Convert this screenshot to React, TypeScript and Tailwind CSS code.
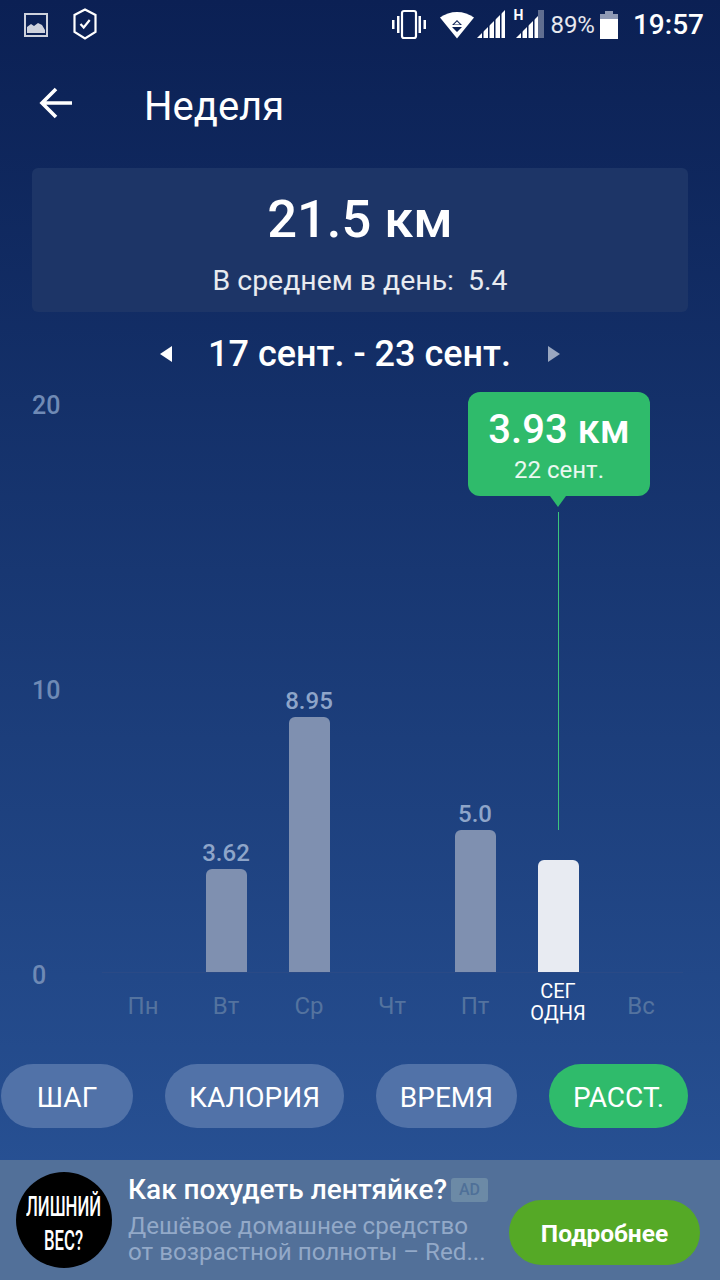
const font = { fontFamily: 'Roboto, "Noto Sans", sans-serif' };

function StatusBar() {
  return (
    <div className="flex h-[50px] items-center justify-between pl-[24px] pr-[16px] text-white">
      <div className="flex items-center gap-[25px]">
        <svg width="24" height="24" viewBox="0 0 24 24" className="opacity-80">
          <rect x="1" y="1" width="22" height="22" fill="none" stroke="#fff" strokeWidth="2" />
          <path d="M3 20v-6l4-3 3 2 4-3 4 2 3 5v3z" fill="#fff" />
        </svg>
        <svg width="24" height="32" viewBox="0 0 24 32" className="-mt-[2px]">
          <path d="M12 1.5 22.5 7v17L12 30.5 1.500 24V7z" fill="none" stroke="#fff" strokeWidth="2.200" />
          <path d="m7.500 16 3.200 3.500 6-7.500" fill="none" stroke="#fff" strokeWidth="2.200" />
        </svg>
      </div>
      <div className="flex items-center">
        <svg width="36" height="32" viewBox="0 0 36 32" className="mr-[13px]">
          <rect x="11" y="2" width="14" height="27" rx="2" fill="none" stroke="#fff" strokeWidth="2.200" />
          <path d="M6 7h2.500v17H6zM27.500 7H30v17h-2.500zM1 11h2.500v9H1zM32.500 11H35v9h-2.500z" fill="#fff" />
        </svg>
        <svg width="34" height="28" viewBox="0 0 34 28" className="mr-[3px]">
          <path d="M0 6.500C9.500-1 24.500-1 34 6.500L17 27.500z" fill="#fff" />
          <path d="m17 9 5 5H12zM12 16h10l-5 5z" fill="#0b2054" />
          <path d="m17 10.500 3 3h-6z" fill="#fff" />
        </svg>
        <svg width="28" height="30" viewBox="0 0 28 30">
          <path d="M0 28 28 0v28z" fill="#fff" />
          <path d="M5 30V20h1.500v10zM11 30V14h1.500v16zM17 30V8h1.500v22zM23 30V2h1.500v28z" fill="#0b2054" />
        </svg>
        <div className="relative ml-[11px] h-[30px] w-[28px]">
          <span className="absolute left-[-3px] top-[-3px] text-[14px] leading-[16px] font-bold">H</span>
          <svg width="28" height="30" viewBox="0 0 28 30">
            <path d="M0 28 22 6v22z" fill="#fff" />
            <path d="M22 28V0l6 0v28z" fill="#fff" opacity="0.35" />
            <path d="M5 30V20h1.500v10zM11 30V14h1.500v16zM17 30V8h1.500v22z" fill="#0b2054" />
          </svg>
        </div>
        <span className="ml-[6px] text-[24px] leading-[30px] text-white/90">89%</span>
        <svg width="20" height="30" viewBox="0 0 20 30" className="ml-[4px]">
          <path d="M6 1h8v3h5v25H1V4h5z" fill="#fff" />
          <path d="M6 1h8v3h5v5H1V4h5z" fill="#8f9ab5" />
        </svg>
        <span className="ml-[14px] text-[28px] leading-[32px] font-medium">19:57</span>
      </div>
    </div>
  );
}

function Header() {
  return (
    <div className="flex h-[118px] items-start pt-[33px]">
      <svg width="36" height="34" viewBox="0 0 36 34" className="ml-[38px] mt-[3px]">
        <path d="M34 17H4M18 3 4 17l14 14" fill="none" stroke="#fff" strokeWidth="3.600" />
      </svg>
      <h1 className="ml-[70px] text-[40px] leading-[48px] font-normal text-white">Неделя</h1>
    </div>
  );
}

function Summary() {
  return (
    <div className="mx-[32px] flex h-[144px] flex-col items-center rounded-[6px] bg-[#1d3567] text-white">
      <div className="mt-[20px] text-[52.500px] leading-[62px] font-medium">21.5 км</div>
      <div className="mt-[15px] text-[28.400px] leading-[32px] text-white/90">
        В среднем в день:&nbsp;&nbsp;5.4
      </div>
    </div>
  );
}

function DateRow() {
  return (
    <div className="flex h-[80px] items-center justify-center pt-[3px] text-white">
      <svg width="12" height="16" viewBox="0 0 12 16" className="mr-[36px]">
        <path d="M12 0v16L0 8z" fill="#fff" />
      </svg>
      <span className="text-[36px] leading-[44px] font-medium">17 сент. - 23 сент.</span>
      <svg width="12" height="16" viewBox="0 0 12 16" className="ml-[37px]">
        <path d="M0 0v16l12-8z" fill="#9aa7c0" />
      </svg>
    </div>
  );
}

const days = [
  { label: 'Пн', value: '', h: 0 },
  { label: 'Вт', value: '3.62', h: 103 },
  { label: 'Ср', value: '8.95', h: 255 },
  { label: 'Чт', value: '', h: 0 },
  { label: 'Пт', value: '5.0', h: 142 },
  { label: 'СЕГОДНЯ', value: '', h: 112, today: true },
  { label: 'Вс', value: '', h: 0 },
];

function Chart() {
  return (
    <div className="relative flex h-[672px] pl-[32px]">
      <div className="mt-[1px] flex h-[596px] w-[28px] flex-col justify-between text-[25px] leading-[26px] font-medium text-[#6f8ab5]">
        <span>20</span>
        <span>10</span>
        <span>0</span>
      </div>
      <div className="ml-[41.500px] flex w-[581px] flex-col">
        <div className="flex h-[581px] border-b border-[#2a4a86]">
          {days.map((d) => (
            <div key={d.label} className="flex w-[83px] flex-col items-center justify-end">
              {d.value && (
                <span className="mb-[1px] text-[24px] leading-[30px] font-medium text-[#8ea5c9]">{d.value}</span>
              )}
              {d.h > 0 && (
                <div
                  className={`w-[41px] rounded-t-[6px] ${d.today ? 'bg-[#e8ebf2]' : 'bg-[#7f90b0]'}`}
                  style={{ height: d.h }}
                />
              )}
            </div>
          ))}
        </div>
        <div className="flex h-[57px]">
          {days.map((d) => (
            <div key={d.label} className="flex w-[83px] items-center justify-center pt-[8px]">
              {d.today ? (
                <span className="-mt-[8px] text-center text-[20px] leading-[22px] text-white">
                  СЕГ
                  <br />
                  ОДНЯ
                </span>
              ) : (
                <span className="text-[24px] leading-[30px] text-[#54739f]">{d.label}</span>
              )}
            </div>
          ))}
        </div>
      </div>
      <div className="absolute left-[468px] top-0 flex h-[104px] w-[182px] flex-col items-center rounded-[12px] bg-[#2fbb6b] text-white">
        <span className="mt-[11px] text-[40px] leading-[54px] font-medium">3.93 км</span>
        <span className="text-[24px] leading-[26px] text-white/90">22 сент.</span>
        <div className="absolute left-[82px] top-[104px] h-0 w-0 border-x-[8px] border-t-[11px] border-x-transparent border-t-[#2fbb6b]" />
      </div>
      <div className="absolute left-[557.500px] top-[120px] h-[318px] w-px bg-[#3cc47c]" />
    </div>
  );
}

function Pills() {
  const base = 'flex h-[64px] items-center justify-center rounded-full pt-[3px] text-[28px] text-white';
  return (
    <div className="flex h-[96px] items-start pl-[1px]">
      <div className={`${base} w-[132px] bg-[#5172a8]`}>ШАГ</div>
      <div className={`${base} ml-[32px] w-[179px] bg-[#5172a8]`}>КАЛОРИЯ</div>
      <div className={`${base} ml-[32px] w-[141px] bg-[#5172a8]`}>ВРЕМЯ</div>
      <div className={`${base} ml-[32px] w-[139px] bg-[#2fbb6b]`}>РАССТ.</div>
    </div>
  );
}

function Ad() {
  return (
    <div className="flex h-[120px] items-start bg-[#527099] pl-[16px] pt-[12px]">
      <div className="flex h-[96px] w-[96px] shrink-0 flex-col items-center justify-center rounded-full bg-black pt-[8px] text-[27px] leading-[34px] font-medium text-white">
        <span className="scale-x-[0.62] whitespace-nowrap">ЛИШНИЙ</span>
        <span className="scale-x-[0.62] whitespace-nowrap">ВЕС?</span>
      </div>
      <div className="ml-[16px] w-[381px] shrink-0 pt-[1px]">
        <div className="flex h-[34px] items-center">
          <span className="w-[317px] whitespace-nowrap text-[28px] leading-[34px] font-medium text-white">Как похудеть лентяйке?</span>
          <span className="ml-[6px] rounded-[3px] bg-[#6c8aa6] px-[8px] text-[16px] leading-[24px] font-medium text-[#4f7098]">AD</span>
        </div>
        <div className="mt-[6px] text-[24.200px] leading-[26px] text-[#93a9c8]">
          Дешёвое домашнее средство
          <br />
          от возрастной полноты – Red...
        </div>
      </div>
      <div className="mt-[28px] flex h-[65px] w-[191px] shrink-0 items-center justify-center rounded-full bg-[#55a926] pt-[3px] text-[24.500px] font-bold text-white">
        Подробнее
      </div>
    </div>
  );
}

export default function App() {
  return (
    <div className="flex h-[1280px] w-[720px] flex-col overflow-hidden bg-gradient-to-b from-[#0b2054] to-[#2a5599]" style={font}>
      <StatusBar />
      <Header />
      <Summary />
      <DateRow />
      <Chart />
      <Pills />
      <Ad />
    </div>
  );
}
